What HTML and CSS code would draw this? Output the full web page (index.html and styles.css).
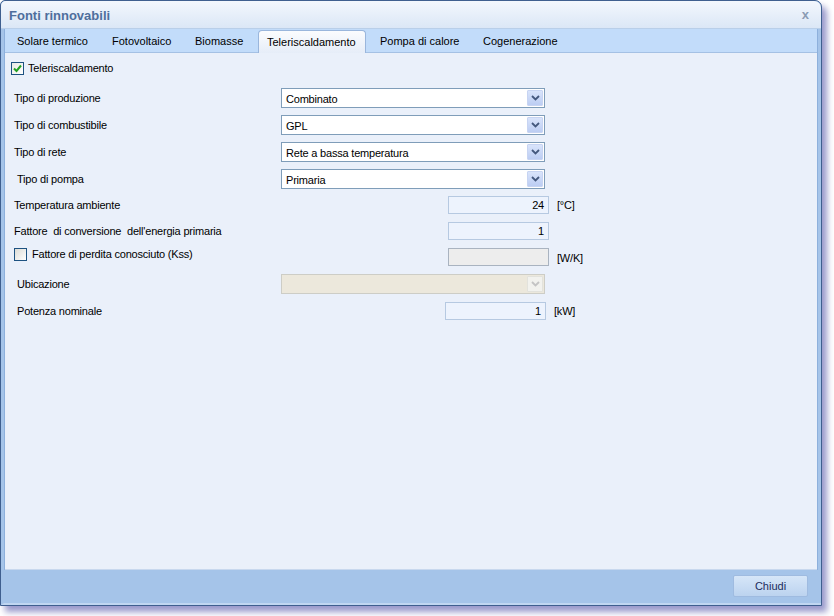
FILE: index.html
```html
<!DOCTYPE html>
<html>
<head>
<meta charset="utf-8">
<link rel="stylesheet" href="styles.css">
</head>
<body>
<div class="window">
  <div class="titlebar">
    <span class="title">Fonti rinnovabili</span>
    <span class="close">x</span>
  </div>
  <div class="frame">
    <div class="tabs">
      <div class="tab t1">Solare termico</div>
      <div class="tab t2">Fotovoltaico</div>
      <div class="tab t3">Biomasse</div>
      <div class="tab t4 active">Teleriscaldamento</div>
      <div class="tab t5">Pompa di calore</div>
      <div class="tab t6">Cogenerazione</div>
    </div>
    <div class="panel">
      <label class="check-row">
        <span class="checkbox checked"><svg viewBox="0 0 9 9" width="9" height="9"><path d="M1 4.5 L3.5 7 L8 1.5" fill="none" stroke="#22a022" stroke-width="2"/></svg></span>
        <span>Teleriscaldamento</span>
      </label>
      <div class="rows">
        <div class="row">
          <span class="label">Tipo di produzione</span>
          <div class="combo"><span class="combo-text">Combinato</span><span class="drop"><svg viewBox="0 0 9 6" width="9" height="6"><path d="M1 1 L4.5 4.5 L8 1" fill="none" stroke="#44587e" stroke-width="1.8"/></svg></span></div>
        </div>
        <div class="row">
          <span class="label">Tipo di combustibile</span>
          <div class="combo"><span class="combo-text">GPL</span><span class="drop"><svg viewBox="0 0 9 6" width="9" height="6"><path d="M1 1 L4.5 4.5 L8 1" fill="none" stroke="#44587e" stroke-width="1.8"/></svg></span></div>
        </div>
        <div class="row">
          <span class="label">Tipo di rete</span>
          <div class="combo"><span class="combo-text">Rete a bassa temperatura</span><span class="drop"><svg viewBox="0 0 9 6" width="9" height="6"><path d="M1 1 L4.5 4.5 L8 1" fill="none" stroke="#44587e" stroke-width="1.8"/></svg></span></div>
        </div>
        <div class="row">
          <span class="label indent">Tipo di pompa</span>
          <div class="combo"><span class="combo-text">Primaria</span><span class="drop"><svg viewBox="0 0 9 6" width="9" height="6"><path d="M1 1 L4.5 4.5 L8 1" fill="none" stroke="#44587e" stroke-width="1.8"/></svg></span></div>
        </div>
        <div class="row irow">
          <span class="label wide">Temperatura ambiente</span>
          <div class="num">24</div>
          <span class="unit">[°C]</span>
        </div>
        <div class="row irow">
          <span class="label wide">Fattore&nbsp; di conversione&nbsp; dell'energia primaria</span>
          <div class="num">1</div>
        </div>
        <div class="row irow top">
          <label class="label wide cblabel">
            <span class="checkbox"></span>
            <span>Fattore di perdita conosciuto (Kss)</span>
          </label>
          <div class="num disabled"></div>
          <span class="unit low">[W/K]</span>
        </div>
        <div class="row">
          <span class="label indent">Ubicazione</span>
          <div class="combo off"><span class="combo-text"></span><span class="drop"><svg viewBox="0 0 9 6" width="9" height="6"><path d="M1 1 L4.5 4.5 L8 1" fill="none" stroke="#c4c4c4" stroke-width="1.8"/></svg></span></div>
        </div>
        <div class="row irow pot">
          <span class="label indent wide2">Potenza nominale</span>
          <div class="num">1</div>
          <span class="unit">[kW]</span>
        </div>
      </div>
    </div>
  </div>
  <div class="footer">
    <button class="btn">Chiudi</button>
  </div>
</div>
</body>
</html>
```

FILE: styles.css
```css
* { box-sizing: border-box; }
html, body { margin: 0; padding: 0; background: #ffffff; }
body {
  font-family: "Liberation Sans", Arial, sans-serif;
  font-size: 11px;
  color: #000;
  width: 834px;
  height: 616px;
  overflow: hidden;
}
.window {
  width: 822px;
  height: 606px;
  border: 1px solid #3f5f8f;
  border-radius: 5px 7px 0 0;
  background: #a5c4e9;
  box-shadow: 5px 6px 6px rgba(70, 70, 160, 0.55);
  display: flex;
  flex-direction: column;
}
.titlebar {
  height: 28px;
  flex: none;
  display: flex;
  align-items: center;
  justify-content: space-between;
  padding: 0 9px 0 8px;
  background: linear-gradient(#f3f7fd, #dbe7f6);
  border-bottom: 1px solid #b9cfe9;
  border-radius: 5px 7px 0 0;
}
.title {
  font-weight: bold;
  font-size: 13px;
  color: #4e6e9c;
  padding-top: 2px;
}
.close {
  font-weight: bold;
  font-size: 13px;
  color: #8a9bb3;
  margin-right: 3px;
}
.frame {
  flex: 1;
  display: flex;
  flex-direction: column;
  margin: 0 3px 0 3px;
  border-left: 1px solid #8db0dc;
  border-right: 1px solid #8db0dc;
}
.tabs {
  height: 24px;
  flex: none;
  display: flex;
  align-items: flex-end;
  padding-left: 3px;
  background: #c2dcfa;
  border-bottom: 1px solid #a5c1e4;
}
.tab {
  height: 22px;
  padding: 5px 0 0 9px;
  white-space: nowrap;
}
.t1 { width: 95px; }
.t2 { width: 83px; }
.t3 { width: 72px; }
.t4 { width: 108px; margin-right: 5px; }
.t5 { width: 103px; }
.t6 { width: 100px; }
.tab.active {
  background: linear-gradient(#fbfcfe, #e6edf8);
  border: 1px solid #9ab6dc;
  border-bottom: none;
  border-radius: 4px 4px 0 0;
  padding-left: 8px;
  height: 23px;
  margin-bottom: -1px;
}
.panel {
  flex: 1;
  background: #eaf0fa;
  padding: 8px 0 0 6px;
  border-bottom: 1px solid #c8d8ee;
  letter-spacing: -0.2px;
}
.check-row {
  display: flex;
  align-items: center;
  gap: 4px;
  height: 14px;
}
.checkbox {
  width: 13px;
  height: 13px;
  flex: none;
  border: 1px solid #1d5281;
  background: linear-gradient(135deg, #dcdcd6, #ffffff);
  display: flex;
  align-items: center;
  justify-content: center;
}
.checkbox.checked { background: linear-gradient(135deg, #e8e8e2, #ffffff); }
.rows {
  margin-top: 13px;
  display: flex;
  flex-direction: column;
  gap: 7px;
}
.row {
  display: flex;
  align-items: center;
  height: 20px;
}
.row.irow { height: 19px; align-items: flex-start; }
.row.irow .label { line-height: 18px; }
.label {
  width: 270px;
  padding-left: 3px;
  flex: none;
  white-space: nowrap;
}
.label.indent { padding-left: 6px; }
.label.wide { width: 437px; }
.label.wide2 { width: 434px; }
.cblabel {
  display: flex;
  align-items: flex-start;
  gap: 5px;
  padding-left: 3px;
}
.cblabel span:last-child { line-height: 13px; }
.row.pot { margin-top: 1px; }
.combo {
  width: 264px;
  height: 20px;
  border: 1px solid #7f9db9;
  background: #fff;
  display: flex;
  align-items: center;
  justify-content: space-between;
  padding: 0 1px 0 4px;
}
.combo-text { padding-top: 1px; }
.drop {
  width: 16px;
  height: 16px;
  background: linear-gradient(#d9e4fb, #bccdf3);
  border: 1px solid #c7d4f2;
  border-radius: 1px;
  display: flex;
  align-items: center;
  justify-content: center;
}
.combo.off {
  background: #ece8dc;
  border-color: #cdcdc6;
}
.combo.off .drop {
  background: #f2f2ee;
  border-color: #e2e2dc;
}
.num {
  width: 101px;
  height: 18px;
  border: 1px solid #b6c9e1;
  background: #edf3fd;
  text-align: right;
  padding: 2px 4px 0 0;
  flex: none;
}
.num.disabled {
  background: #ededed;
  border-color: #a9b3c0;
}
.unit {
  margin-left: 8px;
  line-height: 18px;
}
.unit.low { line-height: 20px; }
.footer {
  height: 35px;
  flex: none;
  display: flex;
  justify-content: flex-end;
  align-items: flex-start;
  padding: 5px 13px 0 0;
  background: #a5c4e9;
  border-left: 3px solid #a5c4e9;
  border-bottom: 2px solid #c0d6f1;
}
.btn {
  width: 75px;
  height: 22px;
  font-family: "Liberation Sans", Arial, sans-serif;
  font-size: 11px;
  color: #1c2c5c;
  background: linear-gradient(#d6e6f8, #bcd3ef);
  border: 1px solid #9fbbe0;
  border-radius: 2px;
  padding: 0;
}
```
